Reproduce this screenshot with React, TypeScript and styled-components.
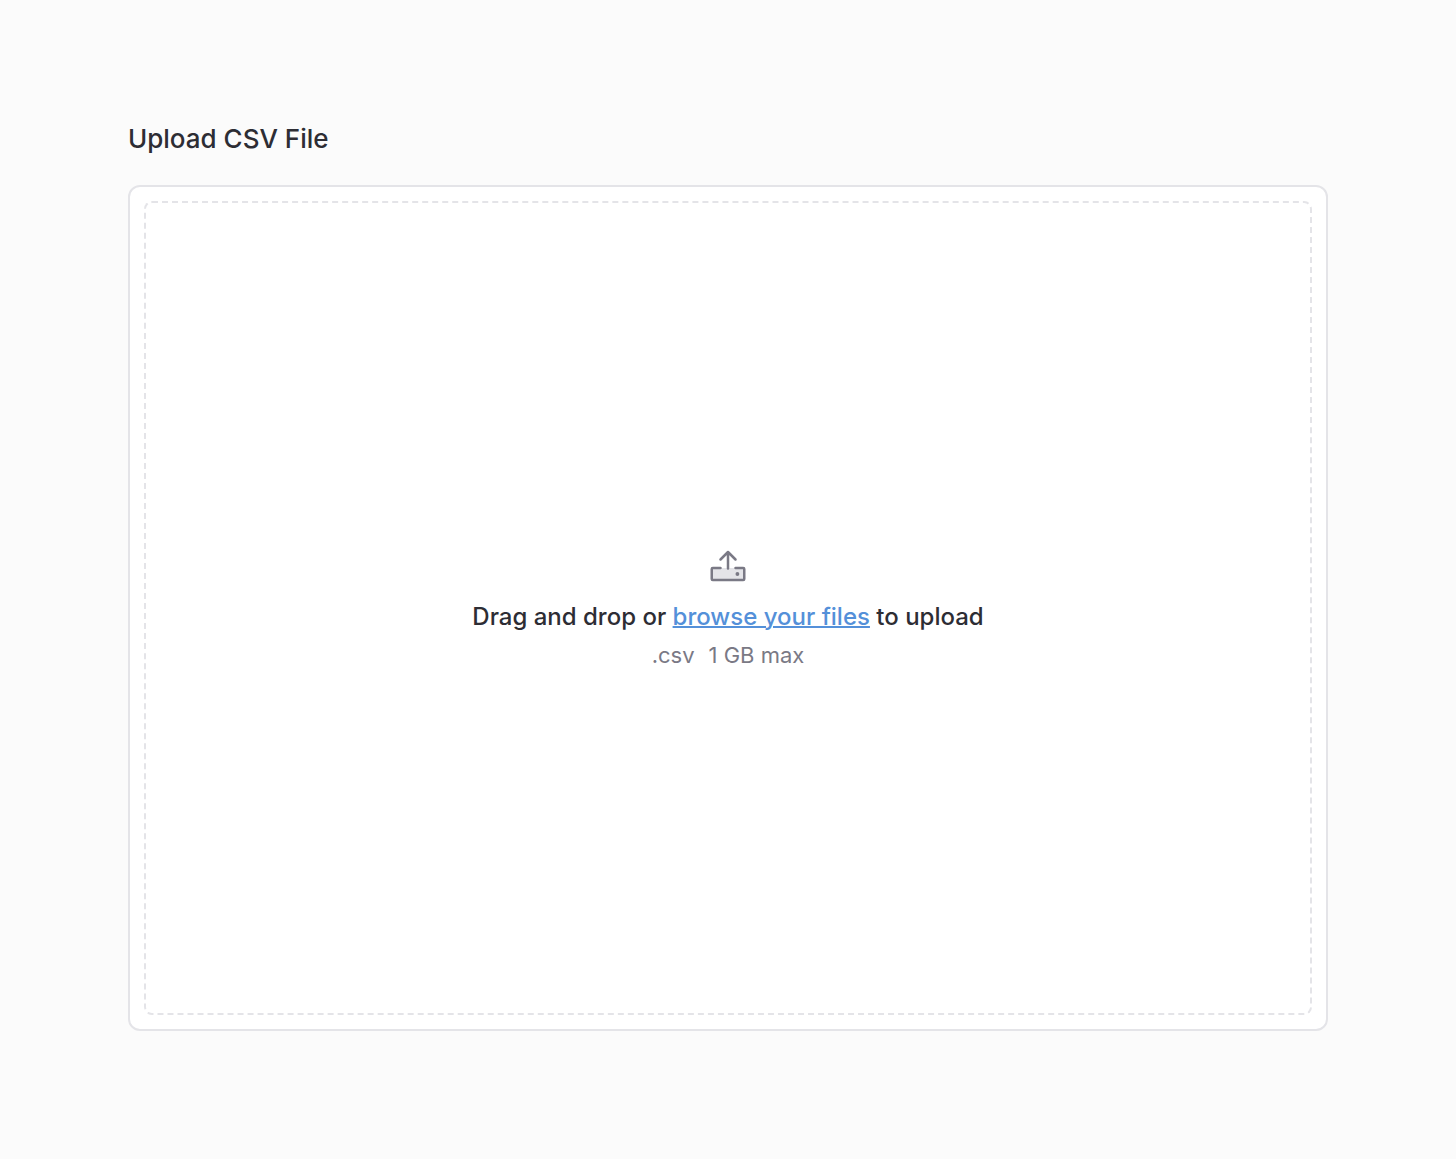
import React, { useRef } from "react";
import styled, { createGlobalStyle } from "styled-components";

const GlobalStyle = createGlobalStyle`
  * { box-sizing: border-box; }
  body {
    margin: 0;
    background: #fbfbfb;
    font-family: Inter, "Liberation Sans", sans-serif;
    color: #2d2d34;
  }
`;

const Page = styled.main`
  display: flex;
  flex-direction: column;
  gap: 28px;
  min-height: 100vh;
  padding: 120px 128px 128px;
`;

const Title = styled.h1`
  margin: 0;
  font-size: 26px;
  line-height: 37px;
  font-weight: 500;
`;

const Card = styled.section`
  display: flex;
  flex: 1;
  padding: 14px;
  border: 2px solid #e4e4e8;
  border-radius: 12px;
  background: #fff;
`;

const DropZone = styled.div`
  display: flex;
  flex: 1;
  flex-direction: column;
  align-items: center;
  justify-content: center;
  border: 2px dashed #e4e4e8;
  border-radius: 8px;
`;

const UploadIcon = styled.svg`
  width: 40px;
  height: 40px;
  margin-bottom: 12px;
`;

const Prompt = styled.p`
  margin: 0;
  font-size: 24px;
  line-height: 36px;
  font-weight: 500;
`;

const BrowseButton = styled.button`
  padding: 0;
  border: 0;
  background: none;
  font: inherit;
  color: #5490d9;
  text-decoration: underline;
  text-decoration-thickness: 2px;
  cursor: pointer;
`;

const Limits = styled.p`
  display: flex;
  gap: 14px;
  margin: 6px 0 0;
  font-size: 22px;
  line-height: 28px;
  color: #7a7985;
`;

export default function App() {
  const picker = useRef<HTMLInputElement>(null);
  return (
    <>
      <GlobalStyle />
      <Page>
        <Title>Upload CSV File</Title>
        <Card>
          <DropZone>
            <UploadIcon viewBox="0 0 40 40" fill="none" stroke="#7a7985" strokeWidth="2.5" strokeLinecap="round" strokeLinejoin="round" aria-hidden="true">
              <rect x="3.75" y="21" width="32.5" height="12" rx="1" fill="#e4e4e8" stroke="none" />
              <path d="M12.5 21H4.75a1 1 0 0 0-1 1v10a1 1 0 0 0 1 1h30.5a1 1 0 0 0 1-1V22a1 1 0 0 0-1-1H27.5" />
              <path d="M20 21.5V5M12.5 12.5 20 5l7.5 7.5" />
              <circle cx="29.4" cy="27" r="1.9" fill="#7a7985" stroke="none" />
            </UploadIcon>
            <Prompt>
              Drag and drop or{" "}
              <BrowseButton type="button" onClick={() => picker.current?.click()}>
                browse your files
              </BrowseButton>{" "}
              to upload
            </Prompt>
            <Limits>
              <span>.csv</span>
              <span>1 GB max</span>
            </Limits>
            <input ref={picker} type="file" accept=".csv" aria-label="CSV file" hidden />
          </DropZone>
        </Card>
      </Page>
    </>
  );
}
